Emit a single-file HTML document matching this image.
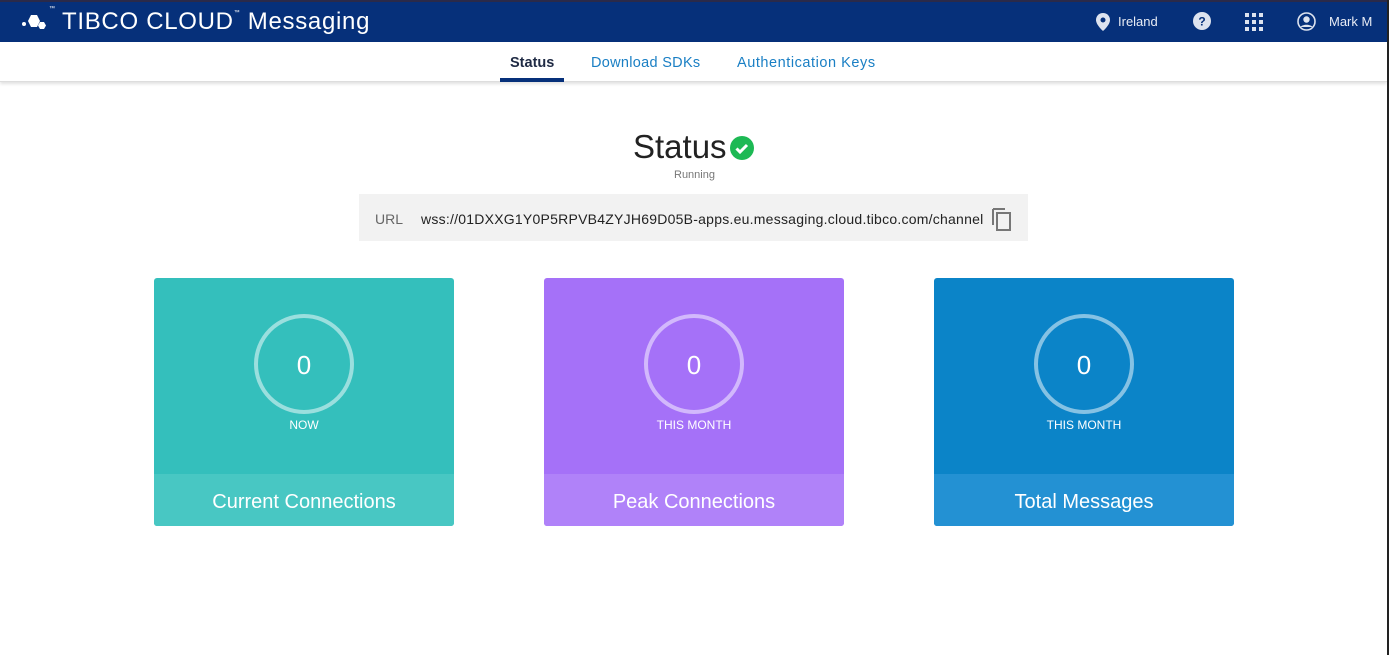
<!DOCTYPE html>
<html><head><meta charset="utf-8"><style>
*{margin:0;padding:0;box-sizing:border-box}
body{width:1389px;height:655px;background:#fff;font-family:"Liberation Sans",sans-serif;position:relative;overflow:hidden}
.hdr{position:absolute;left:0;top:0;width:1389px;height:42px;background:#06307a;border-top:2px solid #2a2a4a;color:#fff}
.logo{position:absolute;left:62px;top:6px;font-size:24px;letter-spacing:0.7px;white-space:nowrap}
.tm{font-size:6px;vertical-align:top;position:relative;top:2px}
.nav{position:absolute;top:0;height:40px;line-height:40px;font-size:13px;color:#e8ecf5}
.sub{position:absolute;left:0;top:42px;width:1387px;height:40px;border-bottom:1px solid #ddd;box-shadow:0 2px 3px rgba(0,0,0,0.12)}
.tab{position:absolute;top:13px;font-size:14.5px;color:#1a7fc4;letter-spacing:0.3px}
.sb{position:absolute;right:0;top:0;width:2px;height:655px;background:#222}
.card{position:absolute;top:278px;width:300px;height:248px;border-radius:3px;overflow:hidden;color:#fff;text-align:center}
.ring{position:absolute;left:100px;top:36px;width:100px;height:100px;border-radius:50%;border:4px solid rgba(255,255,255,0.5);font-size:26px;line-height:94px}
.lbl{position:absolute;left:0;width:300px;top:140px;font-size:12px}
.bot{position:absolute;left:0;top:196px;width:300px;height:52px;line-height:56px;font-size:20px}
</style></head><body>
<div class="hdr">
 <div class="logo"><svg width="34" height="20" viewBox="0 0 34 20" style="position:absolute;left:-40px;top:3px"><circle cx="2" cy="13" r="2" fill="#fff"/><polygon points="9,4 15,4 18,10 15,16 9,16 6,10" fill="#fff"/><polygon points="18,11 22,11 24,14.5 22,18 18,18 16,14.5" fill="#fff"/></svg><span class="tm" style="position:absolute;left:-13px;top:-2px">™</span>TIBCO CLOUD<span class="tm">™</span> Messaging</div>
 <svg style="position:absolute;left:1096px;top:11px" width="14" height="18" viewBox="0 0 14 18"><path d="M7 0C3 0 0 3 0 7c0 5 7 11 7 11s7-6 7-11C14 3 11 0 7 0z" fill="#dde3ef"/><circle cx="7" cy="7" r="2.5" fill="#06307a"/></svg>
 <div class="nav" style="left:1118px">Ireland</div>
 <svg style="position:absolute;left:1193px;top:10px" width="18" height="18"><circle cx="9" cy="9" r="9" fill="#dde3ef"/><text x="9" y="13.5" font-size="12" font-weight="bold" text-anchor="middle" fill="#06307a" font-family="Liberation Sans">?</text></svg>
 <svg style="position:absolute;left:1245px;top:11px" width="20" height="18" fill="#dde3ef"><rect x="0" y="0" width="4" height="4"/><rect x="7" y="0" width="4" height="4"/><rect x="14" y="0" width="4" height="4"/><rect x="0" y="7" width="4" height="4"/><rect x="7" y="7" width="4" height="4"/><rect x="14" y="7" width="4" height="4"/><rect x="0" y="14" width="4" height="4"/><rect x="7" y="14" width="4" height="4"/><rect x="14" y="14" width="4" height="4"/></svg>
 <svg style="position:absolute;left:1297px;top:10px" width="19" height="19" viewBox="0 0 19 19"><circle cx="9.5" cy="9.5" r="8.5" fill="none" stroke="#dde3ef" stroke-width="1.6"/><circle cx="9.5" cy="7.5" r="3.2" fill="#dde3ef"/><path d="M3.5 15c2-3 10-3 12 0" fill="#dde3ef"/></svg>
 <div class="nav" style="left:1329px">Mark M</div>
</div>
<div class="sub">
 <div class="tab" style="left:510px;color:#1f2a44;font-weight:bold;letter-spacing:0">Status</div>
 <div style="position:absolute;left:500px;top:36px;width:64px;height:4px;background:#06307a"></div>
 <div class="tab" style="left:591px">Download SDKs</div>
 <div class="tab" style="left:737px;letter-spacing:0.55px">Authentication Keys</div>
</div>
<div class="sb"></div>
<div style="position:absolute;left:633px;top:128px;font-size:33px;color:#222">Status</div>
<svg style="position:absolute;left:730px;top:136px" width="24" height="24"><circle cx="12" cy="12" r="12" fill="#1db954"/><path d="M6.5 12.5l3.5 3.5 7-7" stroke="#fff" stroke-width="3" fill="none"/></svg>
<div style="position:absolute;left:0;width:1389px;top:169px;text-align:center;font-size:11px;color:#777">Running</div>
<div style="position:absolute;left:359px;top:194px;width:669px;height:47px;background:#f2f2f2"></div>
<div style="position:absolute;left:375px;top:211px;font-size:14px;color:#666">URL</div>
<div style="position:absolute;left:421px;top:211px;font-size:14px;color:#222;letter-spacing:0.24px;white-space:nowrap">wss://01DXXG1Y0P5RPVB4ZYJH69D05B-apps.eu.messaging.cloud.tibco.com/channel</div>
<svg style="position:absolute;left:991px;top:207px" width="22" height="24" viewBox="0 0 22 24"><path d="M2 2v16M2 2h12" stroke="#777" stroke-width="2" fill="none"/><rect x="6" y="6" width="13" height="17" fill="none" stroke="#777" stroke-width="2"/></svg>

<div class="card" style="left:154px;background:#34bfbc"><div class="ring">0</div><div class="lbl">NOW</div><div class="bot" style="background:#48c7c3">Current Connections</div></div>
<div class="card" style="left:544px;background:#a571f8"><div class="ring">0</div><div class="lbl">THIS MONTH</div><div class="bot" style="background:#b082f9">Peak Connections</div></div>
<div class="card" style="left:934px;background:#0b84c8"><div class="ring">0</div><div class="lbl">THIS MONTH</div><div class="bot" style="background:#2391d3">Total Messages</div></div>
</body></html>
